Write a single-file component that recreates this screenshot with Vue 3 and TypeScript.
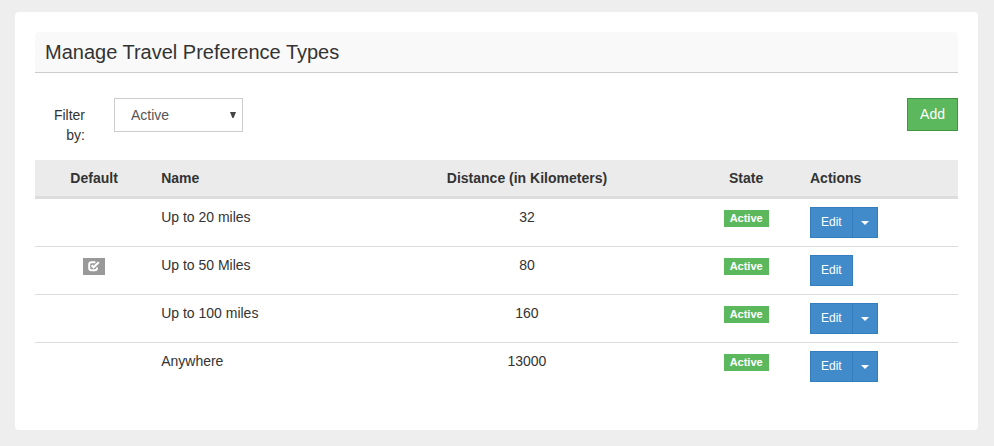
<script setup lang="ts">
import { ref, computed } from 'vue'

interface PreferenceType {
  name: string
  distance: number
  state: string
  isDefault: boolean
}

const filter = ref<string>('Active')

const types = ref<PreferenceType[]>([
  { name: 'Up to 20 miles', distance: 32, state: 'Active', isDefault: false },
  { name: 'Up to 50 Miles', distance: 80, state: 'Active', isDefault: true },
  { name: 'Up to 100 miles', distance: 160, state: 'Active', isDefault: false },
  { name: 'Anywhere', distance: 13000, state: 'Active', isDefault: false },
])

const visibleTypes = computed(() => types.value.filter((t) => t.state === filter.value))
</script>

<template>
  <main class="panel">
    <h1 class="title">Manage Travel Preference Types</h1>

    <div class="toolbar">
      <label class="filter-label" for="state-filter">Filter by:</label>
      <div class="select">
        <select id="state-filter" v-model="filter" class="select-input">
          <option>Active</option>
          <option>Inactive</option>
        </select>
        <svg class="select-arrow" width="6" height="6" viewBox="0 0 6 6" aria-hidden="true">
          <path d="M0 0H6L3.6 6H2.4Z" fill="#444" />
        </svg>
      </div>
      <button type="button" class="btn btn-add">Add</button>
    </div>

    <table class="table">
      <colgroup>
        <col class="col-default" />
        <col class="col-name" />
        <col class="col-distance" />
        <col class="col-state" />
        <col class="col-actions" />
      </colgroup>
      <thead>
        <tr>
          <th class="center">Default</th>
          <th>Name</th>
          <th class="center">Distance (in Kilometers)</th>
          <th class="center">State</th>
          <th>Actions</th>
        </tr>
      </thead>
      <tbody>
        <tr v-for="item in visibleTypes" :key="item.name">
          <td class="center">
            <span v-if="item.isDefault" class="badge badge-default">
              <svg width="12" height="11" viewBox="0 0 12 11" role="img" aria-label="Default">
                <path
                  d="M7.4 1.2H3.6Q1.2 1.2 1.2 3.4V7Q1.2 9.2 3.6 9.2H6.6Q9 9.2 9 7V6.4"
                  fill="none"
                  stroke="#fff"
                  stroke-width="2"
                />
                <path d="M3.6 4.2L5.6 6.2L10.8 1.2" fill="none" stroke="#fff" stroke-width="2.2" />
              </svg>
            </span>
          </td>
          <td>{{ item.name }}</td>
          <td class="center">{{ item.distance }}</td>
          <td class="center"><span class="badge badge-active">{{ item.state }}</span></td>
          <td>
            <div class="btn-group">
              <button type="button" class="btn btn-edit">Edit</button>
              <button
                v-if="!item.isDefault"
                type="button"
                class="btn btn-edit btn-toggle"
                aria-label="More actions"
              >
                <span class="caret"></span>
              </button>
            </div>
          </td>
        </tr>
      </tbody>
    </table>
  </main>
</template>

<style>
body {
  background: #eee;
}
</style>

<style scoped>
.panel,
.panel * {
  box-sizing: border-box;
}

.panel {
  margin: 12px 16px 16px 15px;
  padding: 20px 20px 40px;
  border-radius: 4px;
  background: #fff;
  color: #333;
  font: 14px/20px "Liberation Sans", Arial, sans-serif;
}

.title {
  margin: 0;
  padding: 8px 10px;
  border-bottom: 1px solid #ccc;
  border-radius: 4px 4px 0 0;
  background: #f9f9f9;
  font-size: 20px;
  font-weight: 400;
  line-height: 24px;
}

.toolbar {
  display: flex;
  align-items: flex-start;
  margin: 25px 0 15px;
}

.filter-label {
  width: 50px;
  margin-right: 29px;
  padding-top: 7px;
  text-align: right;
}

.select {
  display: grid;
  align-items: center;
  width: 129px;
}

.select-input {
  grid-area: 1 / 1;
  width: 100%;
  height: 34px;
  padding: 6px 16px;
  border: 1px solid #ccc;
  border-radius: 0;
  background: #fff;
  color: #555;
  font: inherit;
  appearance: none;
}

.select-arrow {
  grid-area: 1 / 1;
  justify-self: end;
  margin-right: 7px;
  pointer-events: none;
}

.btn {
  border: 1px solid;
  border-radius: 0;
  color: #fff;
  font: inherit;
  cursor: pointer;
}

.btn-add {
  height: 33px;
  margin-left: auto;
  padding: 0 12px 1px;
  border-color: #419641;
  background: #5cb85c;
}

.table {
  width: 100%;
  border-collapse: separate;
  border-spacing: 0;
  table-layout: fixed;
}

.col-default {
  width: 12.8%;
}

.col-name {
  width: 22.8%;
}

.col-distance {
  width: 35.4%;
}

.col-state {
  width: 12.1%;
}

.col-actions {
  width: 16.9%;
}

th,
td {
  padding: 8px;
  text-align: left;
  vertical-align: top;
}

th {
  border-bottom: 3px solid #ddd;
  background: #ebebeb;
  font-weight: 700;
}

tbody tr + tr td {
  border-top: 1px solid #ddd;
}

.center {
  text-align: center;
}

.badge {
  display: inline-flex;
  align-items: center;
  justify-content: center;
  height: 17px;
  margin-top: 3px;
  padding: 0 6px;
  color: #fff;
  font-size: 11px;
  font-weight: 700;
  line-height: 17px;
  vertical-align: top;
}

.badge-default {
  width: 22px;
  padding: 0;
  background: #999;
}

.badge-active {
  background: #5cb85c;
}

.btn-group {
  display: flex;
}

.btn-edit {
  height: 31px;
  padding: 0 10px 2px;
  border-color: #357ebd;
  background: #428bca;
  font-size: 12px;
}

.btn-toggle {
  margin-left: -1px;
  padding: 0 8px;
}

.caret {
  display: block;
  border-top: 4px solid #fff;
  border-right: 4px solid transparent;
  border-left: 4px solid transparent;
}
</style>
